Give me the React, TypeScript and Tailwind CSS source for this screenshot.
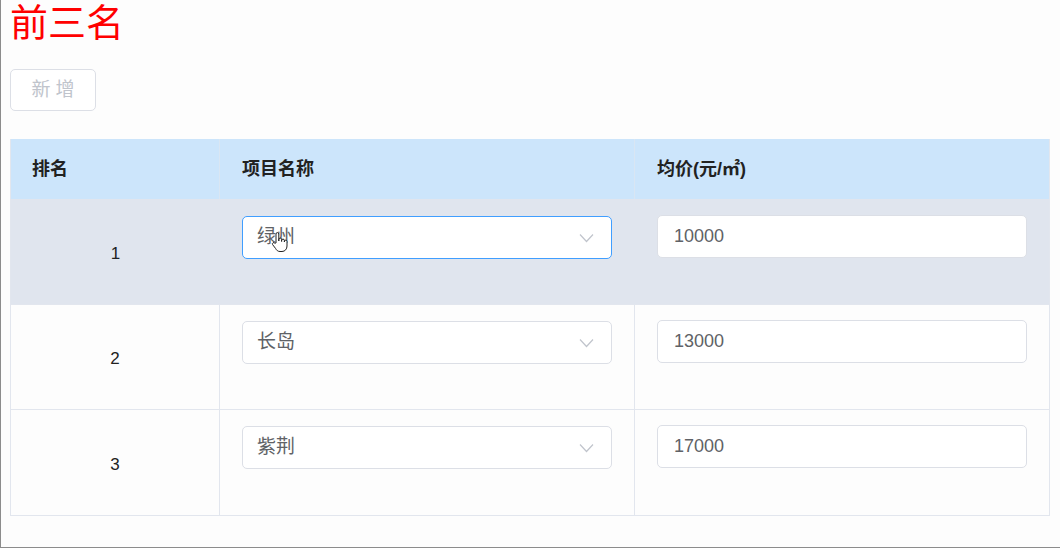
import React from 'react'

const rows = [
  { rank: 1, name: '绿州', price: '10000', active: true },
  { rank: 2, name: '长岛', price: '13000', active: false },
  { rank: 3, name: '紫荆', price: '17000', active: false },
]

function Chevron() {
  return (
    <svg width="15" height="10" viewBox="0 0 15 10" fill="none" className="shrink-0">
      <path d="M1 1.5 L7.5 8.5 L14 1.5" stroke="#c0c4cc" strokeWidth="1.2" />
    </svg>
  )
}

function HandCursor() {
  return (
    <svg width="18" height="22" viewBox="0 0 18 22" className="absolute left-[260px] top-[32px]">
      <path
        d="M5 12 V3 a1.4 1.4 0 0 1 2.8 0 V10 V8.5 a1.4 1.4 0 0 1 2.8 0 V10.5 V9.5 a1.4 1.4 0 0 1 2.8 0 V11 V10.5 a1.3 1.3 0 0 1 2.6 0 V15 c0 3 -2 5.5 -5 5.5 h-2 c-2.2 0 -3.4 -1.2 -4.4 -3 L1.6 13.6 a1.3 1.3 0 0 1 2.2 -1.4 Z"
        fill="#fff"
        stroke="#222"
        strokeWidth="1"
        strokeLinejoin="round"
      />
    </svg>
  )
}

export default function App() {
  return (
    <div className="w-[1060px] h-[548px] border-l border-b border-[#8c8c8c] bg-[#fdfdfd] pl-[9px] font-['Liberation_Sans','Noto_Sans_CJK_SC',sans-serif] text-[#606266]">
      <h1 className="text-[38px] leading-[46px] text-[#ff0000]">前三名</h1>

      <button className="mt-[23px] w-[86px] h-[42px] rounded-[5px] border border-[#dcdfe6] bg-white text-[19px] text-[#c0c4cc] tracking-[5px] pl-[5px]">
        新增
      </button>

      <div className="mt-[28px] w-[1040px] border-l border-b border-r border-[#e2e6ee]">
        {/* header */}
        <div className="flex h-[60px] bg-[#cce5fb] text-[18px] font-bold text-[#222]">
          <div className="w-[209px] flex items-center pl-[21px] border-r border-[#d9e6f3]">排名</div>
          <div className="w-[415px] flex items-center pl-[22px] border-r border-[#d9e6f3]">项目名称</div>
          <div className="flex-1 flex items-center pl-[22px]">均价(元/㎡)</div>
        </div>

        {rows.map((r, i) => (
          <div
            key={r.rank}
            className={
              'relative flex ' +
              (r.active ? 'h-[106px] bg-[#e0e5ee]' : 'h-[105px] bg-[#fdfdfd]') +
              (i < rows.length - 1 ? ' border-b border-[#e2e6ee]' : '')
            }
          >
            <div
              className={
                'w-[209px] flex items-center justify-center pt-[4px] text-[17px] text-[#222] ' +
                (r.active ? '' : 'border-r border-[#e2e6ee]')
              }
            >
              {r.rank}
            </div>
            <div
              className={
                'w-[415px] pl-[22px] ' + (r.active ? 'pt-[17px]' : 'pt-[16px] border-r border-[#e2e6ee]')
              }
            >
              <div
                className={
                  'w-[370px] h-[43px] rounded-[5px] border bg-white flex items-center justify-between pl-[14px] pr-[17px] text-[19px] text-[#606266] ' +
                  (r.active ? 'border-[#409eff]' : 'border-[#dcdfe6]')
                }
              >
                <span>{r.name}</span>
                <Chevron />
              </div>
            </div>
            <div className={'flex-1 pl-[22px] ' + (r.active ? 'pt-[16px]' : 'pt-[15px]')}>
              <div className="w-[370px] h-[43px] rounded-[5px] border border-[#dcdfe6] bg-white flex items-center pl-[16px] text-[18px] text-[#606266]">
                {r.price}
              </div>
            </div>
            {r.active && <HandCursor />}
          </div>
        ))}
      </div>
    </div>
  )
}
